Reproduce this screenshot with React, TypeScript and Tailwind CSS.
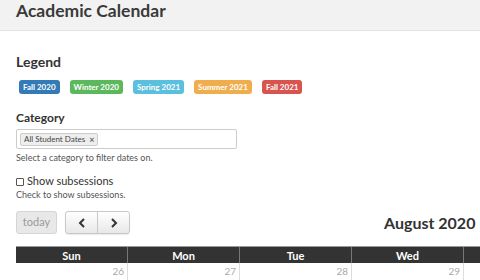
import React from 'react';

const legend = [
  { label: 'Fall 2020', cls: 'bg-[#337ab7]' },
  { label: 'Winter 2020', cls: 'bg-[#5cb85c]' },
  { label: 'Spring 2021', cls: 'bg-[#5bc0de]' },
  { label: 'Summer 2021', cls: 'bg-[#f0ad4e]' },
  { label: 'Fall 2021', cls: 'bg-[#d9534f]' },
];

const days = ['Sun', 'Mon', 'Tue', 'Wed', 'Thu', 'Fri', 'Sat'];
const firstWeek = [26, 27, 28, 29, 30, 31, 1];

export default function App() {
  return (
    <div className="w-[480px] h-[280px] overflow-hidden bg-white text-[#333] font-['Lato','Noto_Sans',sans-serif]">
      <div className="h-[31px] bg-[#f2f2f2] border-b border-[#e3e3e3] px-4 flex items-end">
        <h1 className="text-[17.5px] font-bold leading-none pb-[11px] text-[#3a3a3a]">Academic Calendar</h1>
      </div>

      <div className="px-4 w-[800px]">
        <h2 className="mt-[24px] text-[14px] font-bold leading-none">Legend</h2>
        <div className="mt-[11px] flex gap-[10px] pl-[3px]">
          {legend.map((l) => (
            <span
              key={l.label}
              className={`${l.cls} text-white text-[8px] font-bold h-[14px] px-[4px] rounded-[3px] flex items-center leading-none`}
            >
              {l.label}
            </span>
          ))}
        </div>

        <h3 className="mt-[18px] text-[12px] font-bold leading-none">Category</h3>
        <div className="mt-[5px] w-[221px] h-[20px] border border-[#ccc] rounded-[2px] flex items-center px-[3px]">
          <span className="h-[13px] bg-[#eee] border border-[#ccc] rounded-[2px] px-[3px] text-[8px] leading-none flex items-center gap-[4px] text-[#444]">
            All Student Dates <span className="text-[9px] font-bold text-[#666]">×</span>
          </span>
        </div>
        <p className="mt-[4px] text-[9px] leading-none text-[#555]">Select a category to filter dates on.</p>

        <label className="mt-[12px] flex items-center gap-[3px]">
          <span className="w-[8px] h-[8px] border border-[#555] rounded-[1px] bg-white mt-[4px]" />
          <span className="text-[11px] leading-none text-[#333]">Show subsessions</span>
        </label>
        <p className="mt-[4px] text-[9px] leading-none text-[#555]">Check to show subsessions.</p>

        <div className="mt-[12px] flex items-center">
          <button className="h-[23px] w-[41px] rounded-[3px] border border-[#d5d5d5] bg-[#e8e8e8] text-[11px] text-[#9a9a9a]">
            today
          </button>
          <div className="ml-[8px] flex h-[23px] rounded-[3px] border border-[#c8c8c8] bg-gradient-to-b from-white to-[#e8e8e8] shadow-[0_1px_1px_rgba(0,0,0,0.08)]">
            <button className="w-[32px] flex items-center justify-center border-r border-[#c8c8c8]">
              <svg width="8" height="10" viewBox="0 0 8 10"><path d="M6 1 L2 5 L6 9" fill="none" stroke="#333" strokeWidth="2" /></svg>
            </button>
            <button className="w-[31px] flex items-center justify-center">
              <svg width="8" height="10" viewBox="0 0 8 10"><path d="M2 1 L6 5 L2 9" fill="none" stroke="#333" strokeWidth="2" /></svg>
            </button>
          </div>
          <h2 className="ml-[254px] text-[16px] font-bold leading-none text-[#333]">August 2020</h2>
        </div>

        <div className="mt-[12px] w-[784px] border-t border-[#999]">
          <div className="grid grid-cols-7 bg-[#333]">
            {days.map((d) => (
              <div key={d} className="h-[16px] border-r border-[#777] text-white text-[11px] font-bold flex items-center justify-center leading-none">
                {d}
              </div>
            ))}
          </div>
          <div className="grid grid-cols-7">
            {firstWeek.map((n, i) => (
              <div key={i} className="h-[40px] border-r border-[#ddd] text-right pr-[3px] pt-[3px] text-[10px] leading-none text-[#aaa]">
                {n}
              </div>
            ))}
          </div>
        </div>
      </div>
    </div>
  );
}
